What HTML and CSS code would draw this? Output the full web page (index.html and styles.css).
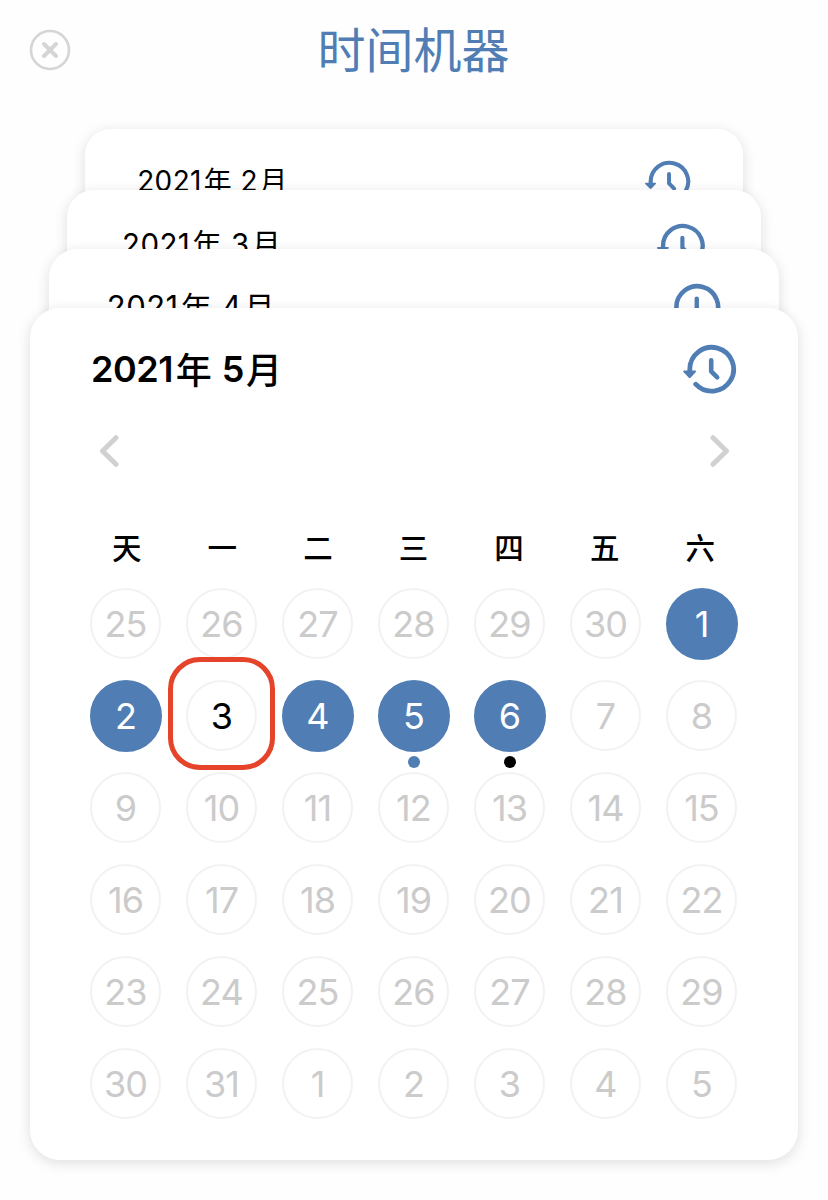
FILE: index.html
```html
<!DOCTYPE html>
<html lang="zh-CN">
<head>
<meta charset="utf-8">
<title>时间机器</title>
<link rel="stylesheet" href="styles.css">
</head>
<body>
<svg class="defs" width="0" height="0" aria-hidden="true">
  <symbol id="history" viewBox="0 0 55 51">
    <path d="M7.8 27V25.3A21.9 21.9 0 1 1 13.7 40.2" fill="none" stroke="currentColor" stroke-width="4.8" stroke-linecap="round"/>
    <path d="M1.8 26.5H13.5Q14.6 27 13.8 28L8.8 33.4Q7.7 34.4 6.6 33.4L1.4 28Q.7 27 1.8 26.5Z" fill="currentColor"/>
    <path d="M29.2 16.4V27.3L35.2 33.3" fill="none" stroke="currentColor" stroke-width="4.6" stroke-linecap="round" stroke-linejoin="round"/>
  </symbol>
</svg>
<header class="topbar">
  <button class="close" aria-label="关闭">
    <svg viewBox="0 0 42 42"><circle cx="21" cy="21" r="19" fill="none" stroke="currentColor" stroke-width="2.6"/><path d="M15 15L27 27M27 15L15 27" stroke="currentColor" stroke-width="4" stroke-linecap="round"/></svg>
  </button>
  <h1 class="title">时间机器</h1>
</header>
<main class="stack">
  <section class="card card-feb">
    <div class="card-head"><h2 class="month"><span class="num">2021</span><span class="han">年</span><span class="num mon">2</span><span class="han">月</span></h2><svg class="history"><use href="#history"/></svg></div>
  </section>
  <section class="card card-mar">
    <div class="card-head"><h2 class="month"><span class="num">2021</span><span class="han">年</span><span class="num mon">3</span><span class="han">月</span></h2><svg class="history"><use href="#history"/></svg></div>
  </section>
  <section class="card card-apr">
    <div class="card-head"><h2 class="month"><span class="num">2021</span><span class="han">年</span><span class="num mon">4</span><span class="han">月</span></h2><svg class="history"><use href="#history"/></svg></div>
  </section>
  <section class="card card-may">
    <div class="card-head"><h2 class="month"><span class="num">2021</span><span class="han">年</span><span class="num mon">5</span><span class="han">月</span></h2><svg class="history"><use href="#history"/></svg></div>
    <nav class="pager">
      <svg class="chevron" viewBox="0 0 20 34"><path d="M17 3.7L3.5 17L17 30.3"/></svg>
      <svg class="chevron" viewBox="0 0 20 34"><path d="M3 3.7L16.5 17L3 30.3"/></svg>
    </nav>
    <div class="weekdays"><span>天</span><span>一</span><span>二</span><span>三</span><span>四</span><span>五</span><span>六</span></div>
    <div class="days">
      <span class="day">25</span><span class="day">26</span><span class="day">27</span><span class="day">28</span><span class="day">29</span><span class="day">30</span><span class="day filled">1</span>
      <span class="day filled">2</span><span class="day current">3</span><span class="day filled">4</span><span class="day filled dot">5</span><span class="day filled dot dot-black">6</span><span class="day">7</span><span class="day">8</span>
      <span class="day">9</span><span class="day">10</span><span class="day">11</span><span class="day">12</span><span class="day">13</span><span class="day">14</span><span class="day">15</span>
      <span class="day">16</span><span class="day">17</span><span class="day">18</span><span class="day">19</span><span class="day">20</span><span class="day">21</span><span class="day">22</span>
      <span class="day">23</span><span class="day">24</span><span class="day">25</span><span class="day">26</span><span class="day">27</span><span class="day">28</span><span class="day">29</span>
      <span class="day">30</span><span class="day">31</span><span class="day">1</span><span class="day">2</span><span class="day">3</span><span class="day">4</span><span class="day">5</span>
    </div>
  </section>
</main>
</body>
</html>
```

FILE: styles.css
```css
* { box-sizing: border-box; }
body {
  margin: 0;
  height: 1200px;
  overflow: hidden;
  background: #fefefe;
  color: #000;
  font-family: Inter, "Noto Sans CJK SC", sans-serif;
}
.defs { display: block; }
.topbar {
  display: grid;
  grid-template-columns: 42px 1fr 42px;
  align-items: center;
  height: 129px;
  padding: 0 29px 29px;
}
.close {
  width: 42px;
  height: 42px;
  padding: 0;
  border: 0;
  background: none;
  color: #d5d5d5;
}
.close svg { display: block; width: 42px; height: 42px; }
.title {
  margin: 0 1px 6px 0;
  text-align: center;
  color: #507eb4;
  font: 400 48px/70px "Noto Sans CJK SC", sans-serif;
}
.stack { display: flex; flex-direction: column; align-items: center; }
.card {
  --s: 1;
  flex: none;
  width: calc(768px * var(--s));
  height: 110px;
  border-radius: calc(30px * var(--s));
  background: #fff;
  box-shadow: 0 3px 14px rgba(0, 0, 0, .13);
}
.card-feb { --s: .857; margin-bottom: -49px; }
.card-mar { --s: .904; margin-bottom: -51px; }
.card-apr { --s: .951; margin-bottom: -51px; }
.card-may { height: 852px; }
.card-head {
  display: flex;
  justify-content: space-between;
  align-items: flex-start;
  padding: calc(36px * var(--s)) calc(61px * var(--s)) 0;
}
.history {
  width: calc(55px * var(--s));
  height: calc(51px * var(--s));
  color: #507eb4;
}
.month {
  display: flex;
  margin: 0;
  font-size: calc(32.6px * var(--s));
  font-weight: 400;
  line-height: calc(51px * var(--s));
}
.card-mar .month { margin-top: -2px; }
.num { letter-spacing: .015em; }
.han {
  margin: -.04em 0 0 .07em;
  font-family: "Noto Sans CJK SC", sans-serif;
}
.mon { margin-left: .31em; }
.month .mon + .han { margin-left: .06em; }
.card-may .month { font-size: 36px; font-weight: 600; }
.card-may .num { letter-spacing: -.012em; }
.card-may .mon { margin-left: .28em; }
.card-may .han { font-weight: 500; }
.pager {
  display: flex;
  justify-content: space-between;
  padding: 39px 68px 0 69px;
}
.chevron {
  width: 20px;
  height: 34px;
  fill: none;
  stroke: #d1d1d1;
  stroke-width: 5;
  stroke-linecap: round;
  stroke-linejoin: round;
}
.weekdays {
  display: grid;
  grid-template-columns: repeat(7, 1fr);
  height: 60px;
  margin: 48px 50px 2px 49px;
  text-align: center;
  font: 500 29.5px/60px "Noto Sans CJK SC", sans-serif;
}
.days {
  display: grid;
  grid-template-columns: repeat(7, 72px);
  grid-auto-rows: 72px;
  gap: 20px 24px;
  padding: 10px 60px 0;
}
.day {
  position: relative;
  display: flex;
  align-items: center;
  justify-content: center;
  width: 71px;
  height: 71px;
  border: 2px solid #f2f2f2;
  border-radius: 50%;
  color: #cbcbcb;
  font-size: 36px;
  letter-spacing: -.025em;
}
.filled {
  width: 72px;
  height: 72px;
  padding-right: 1px;
  border-color: #507eb4;
  background: #507eb4;
  color: #fff;
}
.current { color: #000; }
.current::before {
  content: "";
  position: absolute;
  inset: -25px -20px -21px -20.5px;
  border: 5px solid #e5432a;
  border-radius: 32px;
}
.dot::after {
  content: "";
  position: absolute;
  left: 28px;
  top: 73.5px;
  width: 12px;
  height: 12px;
  border-radius: 50%;
  background: #507eb4;
}
.dot-black::after { background: #000; }
```
